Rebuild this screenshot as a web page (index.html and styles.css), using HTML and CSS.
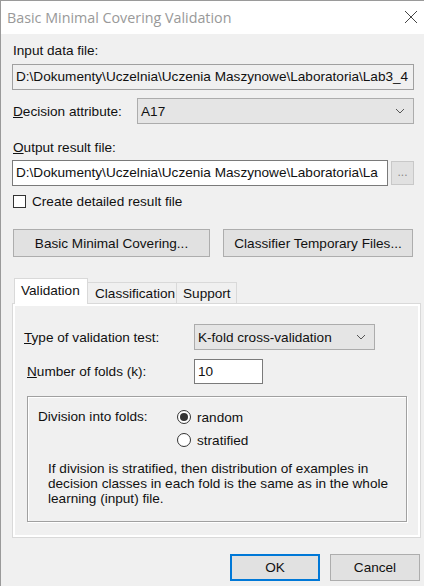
FILE: index.html
```html
<!DOCTYPE html>
<html>
<head>
<meta charset="utf-8">
<link rel="stylesheet" href="styles.css">
</head>
<body>
<div class="dialog">
  <div class="titlebar">
    <span class="title">Basic Minimal Covering Validation</span>
    <svg class="close" width="14" height="14" viewBox="0 0 14 14"><path d="M1 1L13 13M13 1L1 13" stroke="#444" stroke-width="1" fill="none"/></svg>
  </div>
  <div class="content">
    <div class="label first">Input data file:</div>
    <div class="textbox readonly in-file">D:\Dokumenty\Uczelnia\Uczenia Maszynowe\Laboratoria\Lab3_4</div>

    <div class="row decision">
      <div class="row-label"><u>D</u>ecision attribute:</div>
      <div class="combo combo-attr"><span>A17</span><svg class="chev" width="10" height="6" viewBox="0 0 10 6"><path d="M1 1L5 5L9 1" stroke="#555" stroke-width="1" fill="none"/></svg></div>
    </div>

    <div class="label out-label"><u>O</u>utput result file:</div>
    <div class="row out-row">
      <div class="textbox out-file">D:\Dokumenty\Uczelnia\Uczenia Maszynowe\Laboratoria\La</div>
      <div class="browse">...</div>
    </div>

    <div class="row check-row">
      <span class="checkbox"></span>
      <span class="check-label">Create detailed result file</span>
    </div>

    <div class="row btn-row">
      <div class="btn btn-bmc">Basic Minimal Covering...</div>
      <div class="btn btn-ctf">Classifier Temporary Files...</div>
    </div>

    <div class="tabs">
      <div class="tab active">Validation</div>
      <div class="tab">Classification</div>
      <div class="tab">Support</div>
    </div>
    <div class="panel">
      <div class="row type-row">
        <div class="p-label type-label"><u>T</u>ype of validation test:</div>
        <div class="combo combo-type"><span>K-fold cross-validation</span><svg class="chev" width="10" height="6" viewBox="0 0 10 6"><path d="M1 1L5 5L9 1" stroke="#555" stroke-width="1" fill="none"/></svg></div>
      </div>
      <div class="row folds-row">
        <div class="p-label folds-label"><u>N</u>umber of folds (k):</div>
        <div class="textbox folds">10</div>
      </div>
      <div class="group">
        <div class="group-top">
          <div class="div-label">Division into folds:</div>
          <div class="radios">
            <div class="radio-item"><span class="radio checked"></span><span>random</span></div>
            <div class="radio-item"><span class="radio"></span><span>stratified</span></div>
          </div>
        </div>
        <p class="note">If division is stratified, then distribution of examples in decision classes in each fold is the same as in the whole learning (input) file.</p>
      </div>
    </div>

    <div class="row footer">
      <div class="btn ok">OK</div>
      <div class="btn cancel">Cancel</div>
    </div>
  </div>
</div>
</body>
</html>
```

FILE: styles.css
```css
html, body {
  margin: 0;
  padding: 0;
  background: #f0f0f0;
}
body {
  font-family: "Liberation Sans", Arial, sans-serif;
  font-size: 13.6px;
  color: #111;
  width: 424px;
  height: 586px;
  overflow: hidden;
}
.dialog {
  border-left: 1px solid #9a9a9a;
  border-top: 1px solid #9a9a9a;
  height: 585px;
  background: #f0f0f0;
}
.titlebar {
  height: 33px;
  background: #fff;
  display: flex;
  align-items: center;
  justify-content: space-between;
  padding: 0 6px 0 6px;
}
.title {
  font-family: "Open Sans", "Noto Sans", sans-serif;
  font-size: 14.3px;
  color: #999;
  margin-top: -1px;
}
.close {
  margin-top: -1px;
}
.content {
  padding: 9px 0 0 11px;
}
.row {
  display: flex;
  align-items: center;
}
.label {
  line-height: 16px;
  padding-left: 1px;
}
.first {
  margin-bottom: 5px;
}
.textbox {
  box-sizing: border-box;
  height: 26px;
  line-height: 24px;
  border: 1px solid #7a7a7a;
  background: #fff;
  padding: 0 3px;
  white-space: nowrap;
  overflow: hidden;
}
.textbox.readonly {
  background: #f0f0f0;
  border-color: #a0a0a0;
}
.in-file {
  width: 402px;
}
.decision {
  margin-top: 8px;
  height: 26px;
}
.row-label {
  width: 125px;
  padding-left: 1px;
  box-sizing: border-box;
}
.combo {
  box-sizing: border-box;
  height: 26px;
  background: #e5e5e5;
  border: 1px solid #acacac;
  display: flex;
  align-items: center;
  justify-content: space-between;
  padding: 0 8px 0 3px;
}
.combo-attr {
  width: 277px;
}
.out-label {
  margin-top: 16px;
  margin-bottom: 4px;
}
.out-row {
  height: 26px;
}
.out-file {
  width: 376px;
}
.browse {
  box-sizing: border-box;
  width: 23px;
  height: 24px;
  margin-left: 3px;
  background: #e1e1e1;
  border: 1px solid #c8c8c8;
  color: #888;
  font-size: 12px;
  display: flex;
  align-items: center;
  justify-content: center;
  padding-bottom: 2px;
}
.check-row {
  margin-top: 8px;
  height: 14px;
}
.checkbox {
  box-sizing: border-box;
  width: 13px;
  height: 13px;
  border: 1px solid #333;
  background: #fff;
  margin-left: 1px;
}
.check-label {
  margin-left: 6px;
}
.btn {
  box-sizing: border-box;
  height: 28px;
  background: #e1e1e1;
  border: 1px solid #adadad;
  display: flex;
  align-items: center;
  justify-content: center;
}
.btn-row {
  margin-top: 21px;
}
.btn-bmc {
  width: 197px;
  margin-left: 1px;
}
.btn-ctf {
  width: 190px;
  margin-left: 13px;
}
.tabs {
  display: flex;
  align-items: flex-end;
  margin-top: 21px;
  margin-left: 2px;
  height: 25px;
  position: relative;
  z-index: 1;
}
.tab {
  box-sizing: border-box;
  height: 21px;
  border: 1px solid #d9d9d9;
  border-bottom: none;
  border-left: none;
  background: #f0f0f0;
  padding: 0 5px 0 7px;
  display: flex;
  align-items: center;
}
.tab.active {
  height: 26px;
  margin-bottom: -1px;
  background: #fff;
  border-left: 1px solid #d9d9d9;
  padding: 0 6px 2px 6px;
  width: 74px;
}
.tab:nth-child(2) { width: 89px; }
.tab:nth-child(3) { width: 60px; padding-left: 6px; }
.panel {
  box-sizing: border-box;
  width: 409px;
  height: 235px;
  border: 1px solid #d9d9d9;
  box-shadow: inset 0 0 0 2px #fff;
  background: #f0f0f0;
  padding: 20px 0 0 0;
}
.type-row {
  height: 26px;
}
.p-label {
  box-sizing: border-box;
}
.type-label {
  width: 181px;
  padding-left: 11px;
}
.folds-label {
  width: 181px;
  padding-left: 14px;
}
.combo-type {
  width: 181px;
}
.folds-row {
  margin-top: 9px;
  height: 25px;
}
.folds {
  width: 69px;
  height: 25px;
  line-height: 23px;
}
.group {
  box-sizing: border-box;
  margin: 12px 0 0 14px;
  width: 380px;
  height: 126px;
  border: 1px solid #a0a0a0;
  box-shadow: 1px 1px 0 #fff, inset 1px 1px 0 #fff;
  padding: 12px 0 0 10px;
}
.group-top {
  display: flex;
}
.div-label {
  width: 139px;
  line-height: 16px;
}
.radios {
  display: flex;
  flex-direction: column;
  gap: 7px;
}
.radio-item {
  display: flex;
  align-items: center;
  height: 16px;
}
.radio {
  box-sizing: border-box;
  width: 14px;
  height: 14px;
  border: 1px solid #333;
  border-radius: 50%;
  background: #fff;
  margin-right: 6px;
  display: flex;
  align-items: center;
  justify-content: center;
}
.radio.checked::after {
  content: "";
  width: 8px;
  height: 8px;
  border-radius: 50%;
  background: #333;
}
.note {
  margin: 13px 0 0 10px;
  width: 350px;
  line-height: 15px;
}
.footer {
  margin-top: 16px;
  padding-left: 218px;
}
.ok {
  width: 90px;
  height: 27px;
  border: 2px solid #0078d7;
}
.cancel {
  width: 90px;
  height: 27px;
  margin-left: 10px;
}
```
